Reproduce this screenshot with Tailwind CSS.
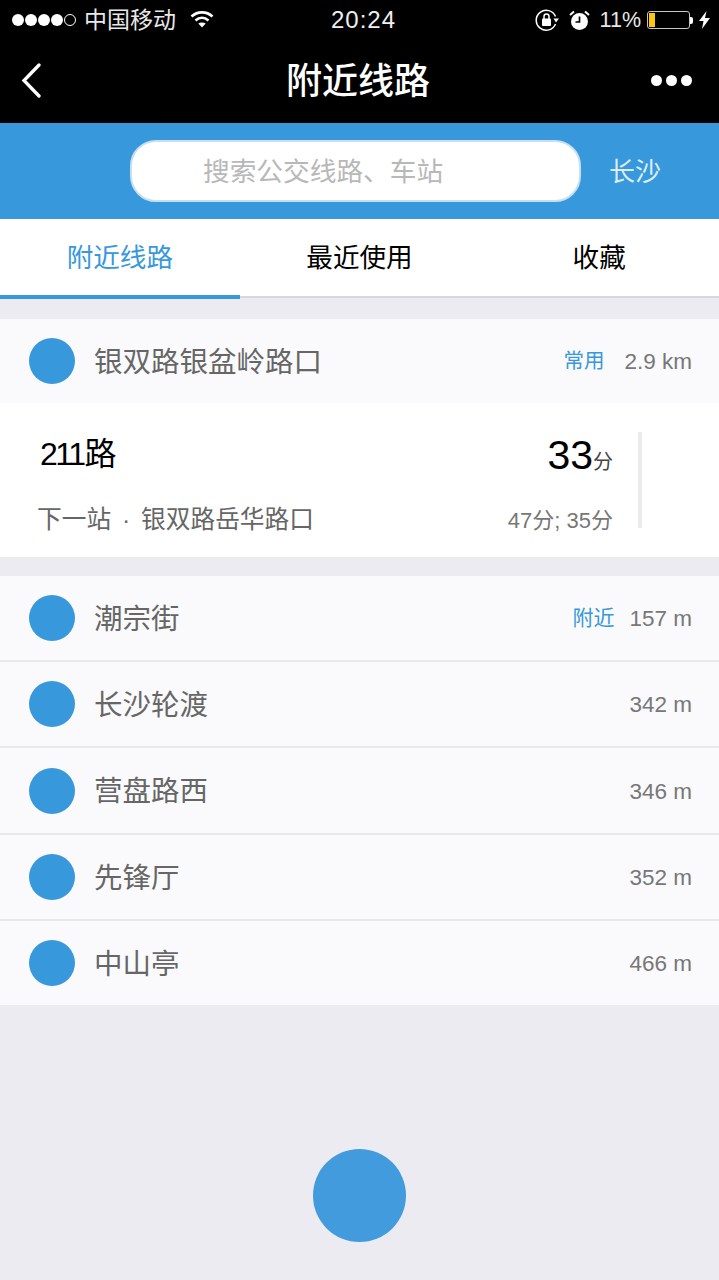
<!DOCTYPE html>
<html>

<head>
  <title>附近线路</title>
  <script src="https://cdn.jsdelivr.net/npm/@tailwindcss/browser@4"></script>
</head>

<body class="bg-[#ebebf1] font-['Liberation_Sans','Noto_Sans_CJK_SC',sans-serif]">
  <div class="w-[719px] h-[1280px] flex flex-col overflow-hidden relative">
    <!-- Status bar + nav -->
    <div class="bg-black h-[123px] text-white shrink-0">
      <div class="h-[40px] flex items-center pl-[12px] pr-[9px]">
        <div class="flex items-center w-[319px]">
          <div class="flex items-center gap-[1px]">
            <span class="w-[12px] h-[12px] rounded-full bg-white"></span>
            <span class="w-[12px] h-[12px] rounded-full bg-white"></span>
            <span class="w-[12px] h-[12px] rounded-full bg-white"></span>
            <span class="w-[12px] h-[12px] rounded-full bg-white"></span>
            <span class="w-[12px] h-[12px] rounded-full border border-white"></span>
          </div>
          <span class="ml-[8px] text-[23px] leading-none text-[#e8e8e8]">中国移动</span>
          <svg class="ml-[14px] -mt-[2px]" width="24" height="18" viewBox="0 0 24 18" fill="none" stroke="white" stroke-width="2.6">
            <path d="M1.5 6.5C7.5 1 16.500 1 22.500 6.500" />
            <path d="M5.500 10.500C9.500 7 14.500 7 18.500 10.500" />
            <path d="M12 17.500L8.300 13.500C10.500 12 13.500 12 15.700 13.500Z" fill="white" stroke="none" />
          </svg>
        </div>
        <span class="text-[24px] leading-none tracking-[1px] text-[#f0f0f0]">20:24</span>
        <div class="flex items-center ml-auto">
          <svg width="24" height="24" viewBox="0 0 24 24" fill="none" stroke="white" stroke-width="1.500">
            <path d="M20.500 8.500A10 10 0 1 0 20.500 16" />
            <path d="M18.500 10.500L24 10.500L21 14.500Z" fill="white" stroke="none" />
            <rect x="7" y="10.500" width="9" height="7.500" rx="1" fill="white" stroke="none" />
            <path d="M9 11V8.500a2.500 2.500 0 0 1 5 0V11" />
          </svg>
          <svg class="ml-[10px]" width="21" height="21" viewBox="0 0 21 21">
            <circle cx="10.500" cy="11.500" r="8.500" fill="white" />
            <path d="M10.500 6.500V12H6.500" fill="none" stroke="black" stroke-width="1.700" />
            <path d="M1 5L5 1.500M20 5L16 1.500" stroke="white" stroke-width="2" />
          </svg>
          <span class="ml-[10px] pt-[2px] text-[21.5px] leading-none text-[#e8e8e8]">11%</span>
          <div class="ml-[6px] w-[43px] h-[18px] rounded-[3px] border border-[#c8c8c8] p-[1px]">
            <div class="w-[6px] h-full bg-[#fcc60e]"></div>
          </div>
          <span class="w-[3px] h-[7px] rounded-r-[2px] bg-white"></span>
          <svg class="ml-[6px]" width="11" height="18" viewBox="0 0 11 18">
            <path d="M7.500 0L0 10H4.500L3 18L11 7H6Z" fill="white" />
          </svg>
        </div>
      </div>
      <div class="h-[83px] flex items-center justify-between relative pl-[21px] pr-[27px]">
        <svg class="-mt-[2px]" width="20" height="35" viewBox="0 0 20 35" fill="none" stroke="white" stroke-width="3.300" stroke-linecap="round">
          <path d="M18 2L3 17.500L18 33" />
        </svg>
        <span class="absolute left-0 w-[716px] top-[20px] text-center text-[36px] leading-[44px] font-medium">附近线路</span>
        <div class="flex gap-[4px] -mt-[2px]">
          <span class="w-[11px] h-[11px] rounded-full bg-white"></span>
          <span class="w-[11px] h-[11px] rounded-full bg-white"></span>
          <span class="w-[11px] h-[11px] rounded-full bg-white"></span>
        </div>
      </div>
    </div>

    <!-- Search -->
    <div class="bg-[#3798dc] h-[96px] flex items-center shrink-0 pl-[130px]">
      <div class="w-[451px] h-[62px] bg-white rounded-[26px] border-2 border-[#c6dff2] flex items-center text-[#b8b8b8] text-[26.7px] pl-[71px] pt-[3px]">搜索公交线路、车站</div>
      <span class="ml-[28px] text-[26px] text-[#dcecf8] pt-[3px]">长沙</span>
    </div>

    <!-- Tabs -->
    <div class="bg-white h-[79px] grid grid-cols-3 shrink-0 border-b-2 border-[#d8d8dc] text-[26.6px] text-black">
      <div class="flex items-center justify-center text-[#3798dc] border-b-[4px] border-[#3798dc] -mb-[3px] pt-[4px]">附近线路</div>
      <div class="flex items-center justify-center pt-[3px]">最近使用</div>
      <div class="flex items-center justify-center pt-[3px]">收藏</div>
    </div>

    <!-- Nearest stop -->
    <div class="mt-[21px] h-[84px] bg-[#fafafc] flex items-center pl-[29px] pr-[27px] shrink-0">
      <span class="w-[46px] h-[46px] rounded-full bg-[#3798dc]"></span>
      <span class="ml-[19px] pt-[2px] text-[28.5px] text-[#666]">银双路银盆岭路口</span>
      <span class="ml-auto text-[20.5px] text-[#3798dc]">常用</span>
      <span class="ml-[20px] pt-[2px] text-[22.5px] text-[#777]">2.9 km</span>
    </div>

    <!-- Line card -->
    <div class="h-[154px] bg-white flex shrink-0 pt-[29px] pl-[37px]">
      <div class="w-[576px]">
        <div class="flex items-center justify-between h-[44px]">
          <span class="text-[32px] leading-none text-black pl-[3px] tracking-[-2.5px]">211<span class="tracking-normal ml-[1px]">路</span></span>
          <span class="text-[41px] leading-none text-black mt-[2px]">33<span class="text-[20px] text-[#444]">分</span></span>
        </div>
        <div class="flex items-center justify-between mt-[22px] h-[44px]">
          <span class="text-[24.7px] text-[#666] flex items-center">下一站<span class="w-[30px] text-center">·</span>银双路岳华路口</span>
          <span class="text-[22px] text-[#777]">47分; 35分</span>
        </div>
      </div>
      <div class="ml-[25px] w-[4px] h-[96px] bg-[#ebebef]"></div>
    </div>

    <!-- Other stops -->
    <div class="mt-[19px] bg-[#fafafc] shrink-0">
      <div class="h-[84px] flex items-center pl-[29px] pr-[27px]">
        <span class="w-[46px] h-[46px] rounded-full bg-[#3798dc]"></span>
        <span class="ml-[19px] pt-[2px] text-[28.5px] text-[#666]">潮宗街</span>
        <span class="ml-auto text-[21px] text-[#3798dc]">附近</span>
        <span class="ml-[15px] pt-[2px] text-[22.5px] text-[#777]">157 m</span>
      </div>
      <div class="h-[86px] flex items-center pl-[29px] pr-[27px] border-t-2 border-[#e8e8ec]">
        <span class="w-[46px] h-[46px] rounded-full bg-[#3798dc]"></span>
        <span class="ml-[19px] pt-[2px] text-[28.5px] text-[#666]">长沙轮渡</span>
        <span class="ml-auto pt-[2px] text-[22.5px] text-[#777]">342 m</span>
      </div>
      <div class="h-[87px] flex items-center pl-[29px] pr-[27px] border-t-2 border-[#e8e8ec]">
        <span class="w-[46px] h-[46px] rounded-full bg-[#3798dc]"></span>
        <span class="ml-[19px] pt-[2px] text-[28.5px] text-[#666]">营盘路西</span>
        <span class="ml-auto pt-[2px] text-[22.5px] text-[#777]">346 m</span>
      </div>
      <div class="h-[86px] flex items-center pl-[29px] pr-[27px] border-t-2 border-[#e8e8ec]">
        <span class="w-[46px] h-[46px] rounded-full bg-[#3798dc]"></span>
        <span class="ml-[19px] pt-[2px] text-[28.5px] text-[#666]">先锋厅</span>
        <span class="ml-auto pt-[2px] text-[22.5px] text-[#777]">352 m</span>
      </div>
      <div class="h-[86px] flex items-center pl-[29px] pr-[27px] border-t-2 border-[#e8e8ec]">
        <span class="w-[46px] h-[46px] rounded-full bg-[#3798dc]"></span>
        <span class="ml-[19px] pt-[2px] text-[28.5px] text-[#666]">中山亭</span>
        <span class="ml-auto pt-[2px] text-[22.5px] text-[#777]">466 m</span>
      </div>
    </div>

    <!-- Floating button -->
    <div class="absolute left-[313px] top-[1149px] w-[93px] h-[93px] rounded-full bg-[#429bdc]"></div>
  </div>
</body>

</html>
